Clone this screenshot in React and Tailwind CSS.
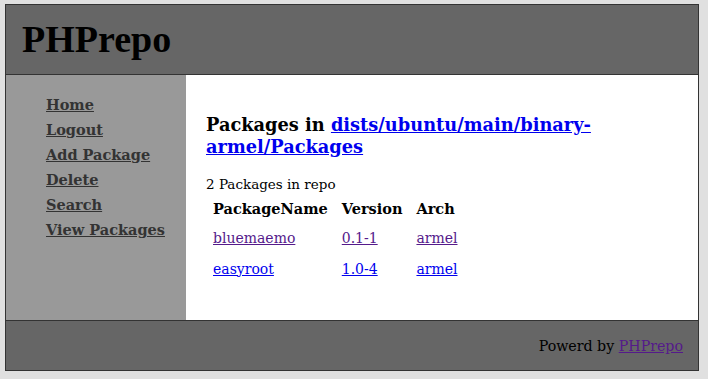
import React from "react";

const menu = ["Home", "Logout", "Add Package", "Delete", "Search", "View Packages"];

const packages = [
  { name: "bluemaemo", version: "0.1-1", arch: "armel", visited: true },
  { name: "easyroot", version: "1.0-4", arch: "armel", visited: false },
];

const serif = "font-['DejaVu_Serif',Georgia,serif]";

export default function App() {
  return (
    <div className={`min-h-screen bg-[#e0e0e0] pt-[4px] pl-[5px] ${serif}`}>
      <div className="w-[694px] border border-[#333]">
        {/* header */}
        <div className="flex h-[70px] items-center border-b border-[#333] bg-[#666] pl-[16px]">
          <h1 className="font-['Liberation_Serif',serif] text-[38px] font-bold text-black">
            PHPrepo
          </h1>
        </div>

        <div className="flex h-[245px]">
          {/* sidebar */}
          <div className="w-[180px] bg-[#999] pl-[40px] pt-[17px]">
            {menu.map((item) => (
              <a
                key={item}
                href="#"
                className="block text-[14.5px] font-bold leading-[25px] text-[#333] underline"
              >
                {item}
              </a>
            ))}
          </div>

          {/* content */}
          <div className="flex-1 bg-white pl-[20px] pr-[40px] pt-[39px]">
            <h2 className="text-[17.8px] font-bold leading-[22px] text-black">
              Packages in{" "}
              <a href="#" className="text-[#0000ee] underline">
                dists/ubuntu/main/binary-armel/Packages
              </a>
            </h2>
            <p className="mt-[16px] text-[13.5px] leading-[20px] text-black">2 Packages in repo</p>
            <table className="border-separate border-spacing-[2px] text-[14px]">
              <thead>
                <tr>
                  <th className="h-[25px] pl-[5px] pr-[7px] text-left text-[14.5px] font-bold">PackageName</th>
                  <th className="pl-[5px] pr-[7px] text-left text-[14.5px] font-bold">Version</th>
                  <th className="px-[5px] text-left text-[14.5px] font-bold">Arch</th>
                </tr>
              </thead>
              <tbody>
                {packages.map((p) => {
                  const color = p.visited ? "text-[#551a8b]" : "text-[#0000ee]";
                  return (
                    <tr key={p.name}>
                      <td className="h-[29px] pl-[5px] pr-[7px] pt-[1px]">
                        <a href="#" className={`${color} underline`}>{p.name}</a>
                      </td>
                      <td className="pl-[5px] pr-[7px] pt-[1px]">
                        <a href="#" className={`${color} underline`}>{p.version}</a>
                      </td>
                      <td className="px-[5px] pt-[1px]">
                        <a href="#" className={`${color} underline`}>{p.arch}</a>
                      </td>
                    </tr>
                  );
                })}
              </tbody>
            </table>
          </div>
        </div>

        {/* footer */}
        <div className="flex h-[50px] items-center justify-end border-t border-[#333] bg-[#666] pr-[15px] pt-[3px] text-[14.2px] text-black">
          Powerd by&nbsp;
          <a href="#" className="text-[#551a8b] underline">PHPrepo</a>
        </div>
      </div>
    </div>
  );
}
